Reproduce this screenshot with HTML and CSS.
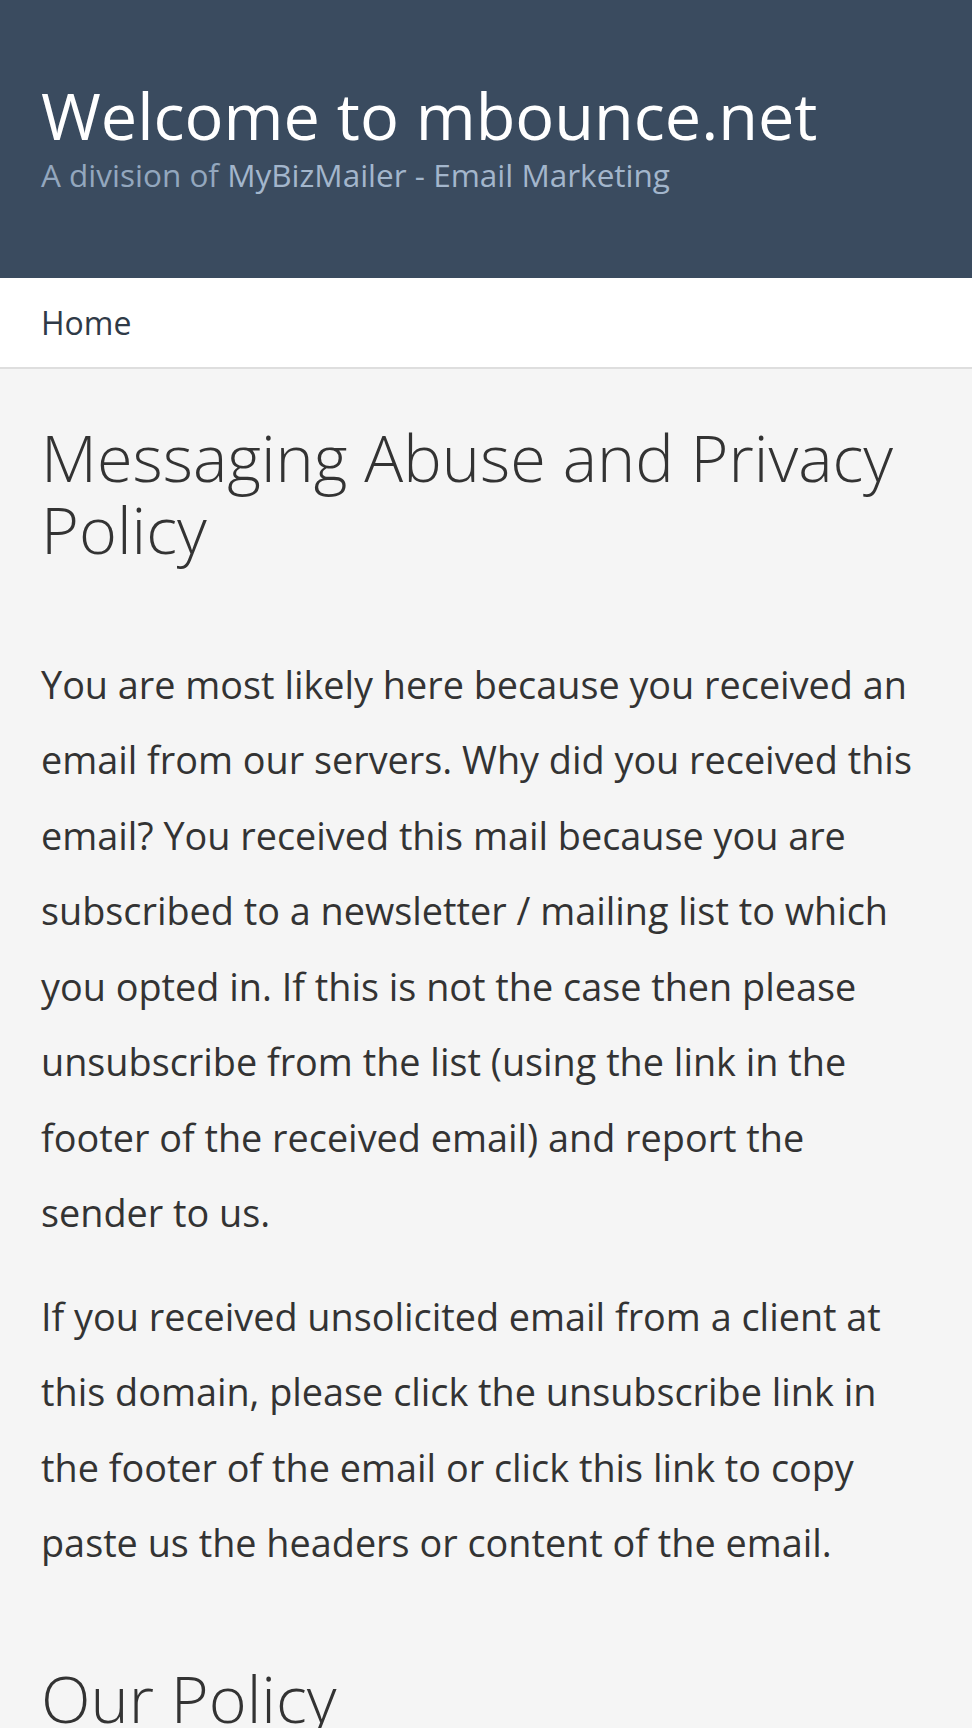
FILE: index.html
```html
<!DOCTYPE html>
<html lang="en">
<head>
<meta charset="utf-8">
<title>mbounce.net</title>
<link rel="stylesheet" href="styles.css">
</head>
<body>
<header class="site-header">
  <h1 class="site-title">Welcome to mbounce.net</h1>
  <p class="site-tagline">A division of <a href="#" class="tagline-link">MyBizMailer - Email Marketing</a></p>
</header>
<nav class="site-nav">
  <a href="#" class="nav-link">Home</a>
</nav>
<main class="content">
  <h2 class="page-title">Messaging Abuse and Privacy Policy</h2>
  <p class="text">You are most likely here because you received an email from our servers. Why did you received this email? You received this mail because you are subscribed to a newsletter / mailing list to which you opted in. If this is not the case then please unsubscribe from the list (using the link in the footer of the received email) and report the sender to us.</p>
  <p class="text">If you received unsolicited email from a client at this domain, please click the unsubscribe link in the footer of the email or click this link to copy paste us the headers or content of the email.</p>
  <h2 class="section-title">Our Policy</h2>
</main>
</body>
</html>
```
FILE: styles.css
```css
html, body {
  margin: 0;
  padding: 0;
}
body {
  background: #f5f5f5;
  font-family: "Open Sans", "Noto Sans", sans-serif;
  color: #333333;
}
.site-header {
  background: #3a4b5f;
  padding: 77px 41px 85px;
}
.site-title {
  margin: 0;
  font-size: 64.8px;
  line-height: 1.2;
  font-weight: 400;
  color: #ffffff;
}
.site-tagline {
  margin: 2px 0 0;
  font-size: 31.5px;
  line-height: 36px;
  color: #93a7be;
}
.tagline-link {
  color: #a3b6cc;
  text-decoration: none;
}
.site-nav {
  background: #ffffff;
  padding: 23px 41px 21px;
  border-bottom: 2px solid #dedede;
}
.nav-link {
  font-size: 32px;
  line-height: 44.8px;
  color: #2f3a47;
  text-decoration: none;
}
.content {
  padding: 0 41px 40px;
}
.page-title, .section-title {
  font-size: 64.8px;
  line-height: 72.7px;
  font-weight: 300;
  color: #333333;
}
.page-title {
  margin: 52px 0 81px;
}
.section-title {
  margin: 81px 0 0;
}
.text {
  margin: 0 0 28px;
  font-size: 37.8px;
  line-height: 75.5px;
}
```
